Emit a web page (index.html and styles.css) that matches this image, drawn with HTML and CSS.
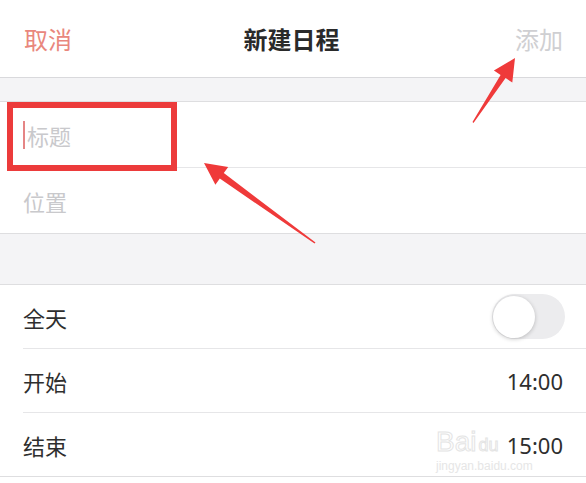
FILE: index.html
```html
<!DOCTYPE html>
<html lang="zh-CN">
<head>
    <meta charset="UTF-8">
    <meta name="viewport" content="width=device-width, initial-scale=1.0">
    <title>新建日程</title>
    <link rel="stylesheet" href="styles.css">
</head>
<body>

    <div class="nav">
        <span class="nav-cancel">取消</span>
        <span class="nav-title">新建日程</span>
        <span class="nav-add">添加</span>
    </div>

    <div class="gap gap-top"></div>

    <div class="group">
        <div class="row row-tall">
            <span class="caret"></span><span class="placeholder">标题</span>
        </div>
        <div class="row row-tall">
            <span class="placeholder">位置</span>
        </div>
    </div>

    <div class="gap gap-mid"></div>

    <div class="group">
        <div class="row">
            <span class="label">全天</span>
            <span class="toggle"><span class="knob"></span></span>
        </div>
        <div class="row">
            <span class="label">开始</span>
            <span class="time">14:00</span>
        </div>
        <div class="row">
            <span class="label">结束</span>
            <span class="time">15:00</span>
        </div>
    </div>

    <!-- annotations drawn over the screenshot -->
    <div class="highlight"></div>
    <svg class="arrows" width="586" height="483" viewBox="0 0 586 483">
        <polygon points="515,58 512.3,82.5 505.6,78.1 473.5,123 472.5,122 500.6,74.9 493.9,70.5" fill="#ef3a3a"/>
        <polygon points="204,163 215.4,184.7 219.8,178.6 314.5,243.5 315.5,242.5 223.8,173 228.2,166.9" fill="#ef3a3a"/>
    </svg>

    <div class="watermark">
        <span class="wm-bai">Bai</span><span class="wm-du">du</span>
        <span class="wm-url">jingyan.baidu.com</span>
    </div>

</body>
</html>
```

FILE: styles.css
```css
body {
    font-family: "Noto Sans CJK SC", "Noto Sans", sans-serif;
    background-color: #ffffff;
    margin: 0;
    width: 586px;
    height: 483px;
    overflow: hidden;
    position: relative;
}
.nav {
    height: 77px;
    border-bottom: 1px solid #d9d9dc;
    display: grid;
    grid-template-columns: 1fr auto 1fr;
    align-items: center;
    padding: 0 23px 0 24px;
    font-size: 24px;
}
.nav-cancel {
    color: #e9877d;
}
.nav-title {
    font-size: 24px;
    font-weight: bold;
    color: #2a2a2a;
    padding-right: 4px;
}
.nav-add {
    color: #cfcfd2;
    text-align: right;
}
.gap {
    background-color: #f4f4f6;
}
.gap-top {
    height: 23px;
}
.gap-mid {
    height: 50px;
}
.group {
    border-top: 1px solid #dedee0;
    border-bottom: 1px solid #dedee0;
}
.row {
    height: 63px;
    margin-left: 23px;
    padding-right: 21px;
    border-bottom: 1px solid #e6e6e8;
    display: flex;
    align-items: center;
    justify-content: space-between;
    font-size: 22px;
}
.row-tall {
    height: 65px;
    justify-content: flex-start;
}
.row:last-child {
    border-bottom: none;
}
.caret {
    width: 2px;
    height: 28px;
    background-color: #e58585;
    margin-right: 2px;
}
.placeholder {
    color: #c9c9cc;
}
.label {
    color: #2e2e2e;
}
.time {
    font-family: "Noto Sans", sans-serif;
    color: #2e2e2e;
    padding-right: 2px;
}
.toggle {
    width: 73px;
    height: 45px;
    border-radius: 23px;
    background-color: #ececee;
    display: flex;
    align-items: center;
    padding-left: 1px;
    box-sizing: border-box;
}
.knob {
    width: 42px;
    height: 42px;
    border-radius: 50%;
    background-color: #ffffff;
    box-shadow: 0 1px 4px rgba(0, 0, 0, 0.22);
}
.highlight {
    position: absolute;
    left: 7px;
    top: 102px;
    width: 170px;
    height: 69px;
    border: 6px solid #ec3b3b;
    box-sizing: border-box;
}
.arrows {
    position: absolute;
    left: 0;
    top: 0;
}
.watermark {
    position: absolute;
    left: 436px;
    top: 428px;
    width: 112px;
    font-family: "Liberation Sans", sans-serif;
    color: transparent;
    -webkit-text-stroke: 1px #e4e4e4;
    line-height: 1;
}
.wm-bai {
    font-size: 28px;
}
.wm-du {
    font-size: 18px;
    margin-left: 2px;
}
.wm-url {
    display: block;
    margin-top: 4px;
    font-size: 12px;
    -webkit-text-stroke: 0;
    color: #e6e6e6;
}
```
